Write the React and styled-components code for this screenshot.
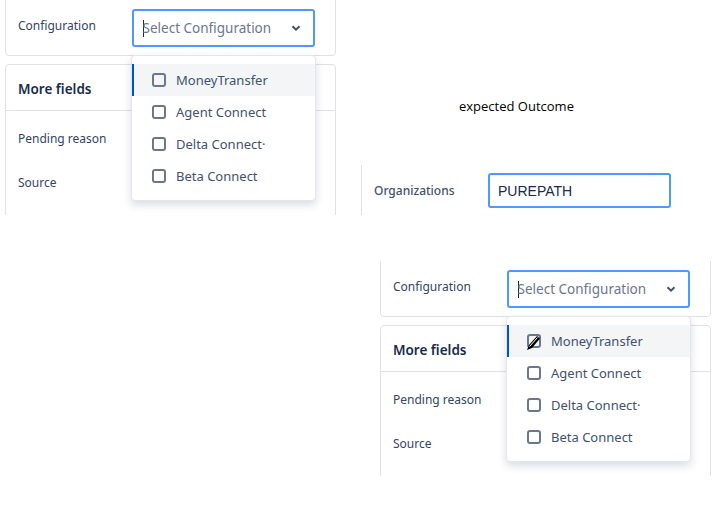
import React from "react";
import styled, { createGlobalStyle } from "styled-components";

const GlobalStyle = createGlobalStyle`
  html, body { margin: 0; padding: 0; background: #fff; }
  body { font-family: "Noto Sans", "Open Sans", sans-serif; }
`;

const Page = styled.div`
  width: 728px;
  height: 515px;
  overflow: hidden;
`;

const TopRow = styled.div`
  display: flex;
  align-items: flex-start;
`;

const ShotFrame = styled.div`
  position: relative;
  width: 331px;
  height: 215px;
  margin-left: ${(p) => p.$left}px;
  margin-top: ${(p) => p.$top || 0}px;
`;

const Clip = styled.div`
  height: 100%;
  overflow: hidden;
`;

const Card = styled.div`
  border: 1px solid #dfe1e6;
  border-radius: 4px;
  background: #fff;
`;

const ConfigCard = styled(Card)`
  margin-top: -6px;
  padding: 14px 20px 8px 12px;
  display: flex;
  align-items: flex-start;
`;

const FieldLabel = styled.div`
  width: 114px;
  font-size: 12px;
  color: #344563;
  padding-top: 9px;
  line-height: 16px;
`;

const SelectBox = styled.div`
  width: 184px;
  height: 38px;
  box-sizing: border-box;
  border: 2px solid #4c9aff;
  border-radius: 3px;
  display: flex;
  align-items: center;
  padding: 0 12px 0 9px;
  font-size: 13.5px;
  color: #6b778c;
`;

const Caret = styled.span`
  display: inline-block;
  width: 1px;
  height: 17px;
  background: #172b4d;
  margin-right: -1px;
`;

const Placeholder = styled.span`
  flex: 1;
  white-space: nowrap;
`;

const FieldsCard = styled(Card)`
  margin-top: 8px;
  height: 200px;
`;

const FieldsHeader = styled.div`
  height: 46px;
  border-bottom: 1px solid #dfe1e6;
  display: flex;
  align-items: center;
  padding: 2px 12px 0;
  font-size: 13.5px;
  font-weight: 600;
  color: #172b4d;
  box-sizing: border-box;
`;

const FieldsBody = styled.div`
  padding: 20px 12px 0;
  display: flex;
  flex-direction: column;
  gap: 28px;
`;

const RowLabel = styled.div`
  font-size: 12px;
  color: #344563;
  line-height: 16px;
`;

const Menu = styled.div`
  position: absolute;
  left: 126px;
  top: 55px;
  width: 185px;
  box-sizing: border-box;
  padding: 8px 0;
  background: #fff;
  border: 1px solid #e4e6ea;
  border-radius: 4px;
  box-shadow: 0 4px 8px rgba(9, 30, 66, 0.15);
`;

const Option = styled.div`
  height: 32px;
  display: flex;
  align-items: center;
  padding-left: 20px;
  gap: 10px;
  font-size: 13px;
  color: #42526e;
  background: ${(p) => (p.$active ? "#f4f5f7" : "transparent")};
  box-shadow: ${(p) => (p.$active ? "inset 2px 0 0 #0052cc" : "none")};
  white-space: nowrap;
`;

const Box = styled.span`
  position: relative;
  width: 14px;
  height: 14px;
  box-sizing: border-box;
  border: 2px solid #6b778c;
  border-radius: 3px;
  flex: none;
`;

const Pointer = styled.svg`
  position: absolute;
  left: -3px;
  top: -2px;
`;

const RightCol = styled.div`
  margin-left: 25px;
  padding-top: 96px;
  width: 360px;
`;

const Note = styled.div`
  margin-left: 98px;
  font-family: "Open Sans", "Noto Sans", sans-serif;
  font-size: 13px;
  color: #000;
  line-height: 20px;
`;

const OrgPanel = styled.div`
  margin-top: 49px;
  height: 50px;
  border-left: 1px solid #dfe1e6;
  display: flex;
  align-items: flex-start;
  padding: 8px 0 0 12px;
  box-sizing: border-box;
`;

const OrgLabel = styled.div`
  width: 114px;
  font-size: 12px;
  font-weight: 500;
  color: #42526e;
  padding-top: 9px;
`;

const TextInput = styled.div`
  width: 183px;
  height: 35px;
  box-sizing: border-box;
  border: 2px solid #4c9aff;
  border-radius: 3px;
  display: flex;
  align-items: center;
  padding-left: 8px;
  font-family: "Liberation Sans", Arial, sans-serif;
  font-size: 14px;
  color: #172b4d;
`;

const Chevron = () => (
  <svg width="10" height="8" viewBox="0 0 10 8">
    <path d="M1.5 2.2 L5 5.6 L8.5 2.2" fill="none" stroke="#42526e" strokeWidth="2" />
  </svg>
);

const options = ["MoneyTransfer", "Agent Connect", "Delta Connect·", "Beta Connect"];

const Shot = ({ left, top, withPointer }) => (
  <ShotFrame $left={left} $top={top}>
    <Clip>
      <ConfigCard>
        <FieldLabel>Configuration</FieldLabel>
        <SelectBox>
          <Caret />
          <Placeholder>Select Configuration</Placeholder>
          <Chevron />
        </SelectBox>
      </ConfigCard>
      <FieldsCard>
        <FieldsHeader>More fields</FieldsHeader>
        <FieldsBody>
          <RowLabel>Pending reason</RowLabel>
          <RowLabel>Source</RowLabel>
        </FieldsBody>
      </FieldsCard>
    </Clip>
    <Menu>
      {options.map((o, i) => (
        <Option key={o} $active={i === 0}>
          <Box>
            {withPointer && i === 0 && (
              <Pointer width="16" height="18" viewBox="0 0 16 18">
                <path d="M1 16 L3 11 L11 2 L14 4.5 L6 14 Z" fill="#000" />
                <path d="M3.5 12.5 L11.5 3.5" stroke="#fff" strokeWidth="1" />
              </Pointer>
            )}
          </Box>
          {o}
        </Option>
      ))}
    </Menu>
  </ShotFrame>
);

export default function App() {
  return (
    <>
      <GlobalStyle />
      <Page>
        <TopRow>
          <Shot left={5} />
          <RightCol>
            <Note>expected Outcome</Note>
            <OrgPanel>
              <OrgLabel>Organizations</OrgLabel>
              <TextInput>PUREPATH</TextInput>
            </OrgPanel>
          </RightCol>
        </TopRow>
        <Shot left={380} top={46} withPointer />
      </Page>
    </>
  );
}
